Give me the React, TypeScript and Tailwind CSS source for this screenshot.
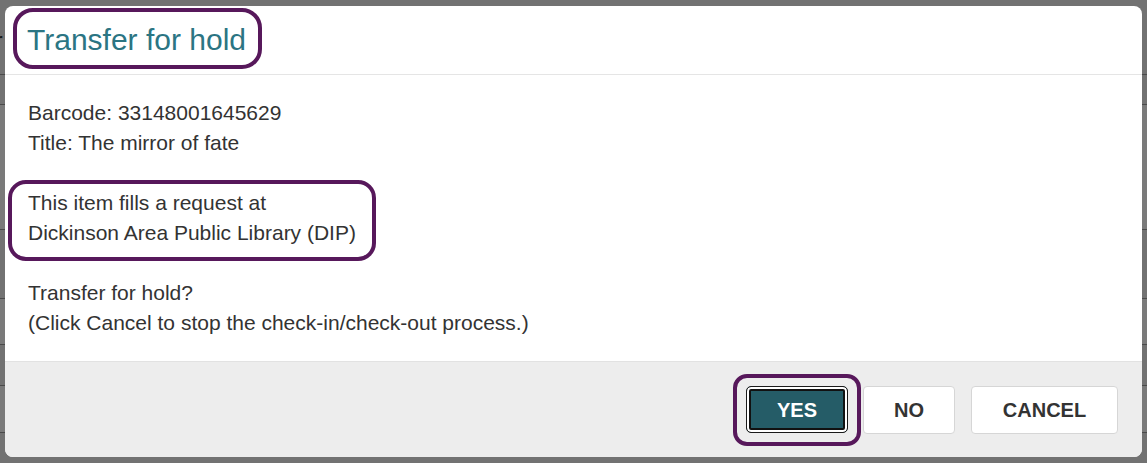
import React from "react";

const font = { fontFamily: '"Liberation Sans", Arial, sans-serif' };

export default function App() {
  return (
    <div className="relative w-[1147px] h-[463px] overflow-hidden bg-[#727272]" style={font}>
      {/* background page rows behind overlay */}
      <div className="flex flex-col">
        <div className="h-[75px] border-b border-[#4a4a4a] text-[26px] text-[#1a1a1a] pt-[28px] leading-none">
          <span className="inline-block -ml-[6px]">r</span>
        </div>
        <div className="h-[30px] border-b border-[#4a4a4a]" />
        <div className="h-[125px] border-b border-[#4a4a4a] bg-[#7a7a7a]" />
        <div className="h-[69px] border-b border-[#4a4a4a]" />
        <div className="h-[46px] border-b border-[#4a4a4a] bg-[#7a7a7a]" />
        <div className="h-[41px] border-b border-[#4a4a4a]" />
        <div className="h-[47px] border-b border-[#4a4a4a] bg-[#7a7a7a]" />
      </div>

      {/* dialog */}
      <div className="absolute left-[5px] top-[6px] w-[1137px] h-[451px] rounded-[8px] bg-white overflow-hidden flex flex-col">
        <div className="h-[69px] shrink-0 flex items-center pl-[22px] border-b border-[#e5e5e5]">
          <h1 className="text-[30px] leading-none text-[#2b7583]">Transfer for hold</h1>
        </div>
        <div className="flex-1 px-[23px] pt-[23px] text-[21px] leading-[30px] text-[#333333]">
          <div>Barcode: 33148001645629</div>
          <div>Title: The mirror of fate</div>
          <div className="h-[30px]" />
          <div>This item fills a request at</div>
          <div>Dickinson Area Public Library (DIP)</div>
          <div className="h-[30px]" />
          <div>Transfer for hold?</div>
          <div>(Click Cancel to stop the check-in/check-out process.)</div>
        </div>
        <div className="h-[96px] shrink-0 bg-[#ededed] border-t border-[#e2e2e2] flex items-center justify-end pr-[24px]">
          <button className="w-[102px] h-[47px] rounded-[5px] bg-[#255c67] text-white font-bold text-[20px] border border-[#1a1a1a] shadow-[inset_0_0_0_2px_#ffffff,inset_0_0_0_4px_#111111]">
            YES
          </button>
          <button className="ml-[15px] w-[92px] h-[48px] rounded-[4px] bg-white border border-[#d6d6d6] text-[#333] font-bold text-[20px]">
            NO
          </button>
          <button className="ml-[16px] w-[147px] h-[48px] rounded-[4px] bg-white border border-[#d6d6d6] text-[#333] font-bold text-[20px]">
            CANCEL
          </button>
        </div>
      </div>

      {/* annotations */}
      <div className="absolute left-[13px] top-[8px] w-[249px] h-[61px] rounded-[20px] border-[4px] border-[#57185b]" />
      <div className="absolute left-[8px] top-[180px] w-[368px] h-[81px] rounded-[18px] border-[4px] border-[#57185b]" />
      <div className="absolute left-[733px] top-[374px] w-[128px] h-[72px] rounded-[14px] border-[4px] border-[#57185b]" />
    </div>
  );
}
